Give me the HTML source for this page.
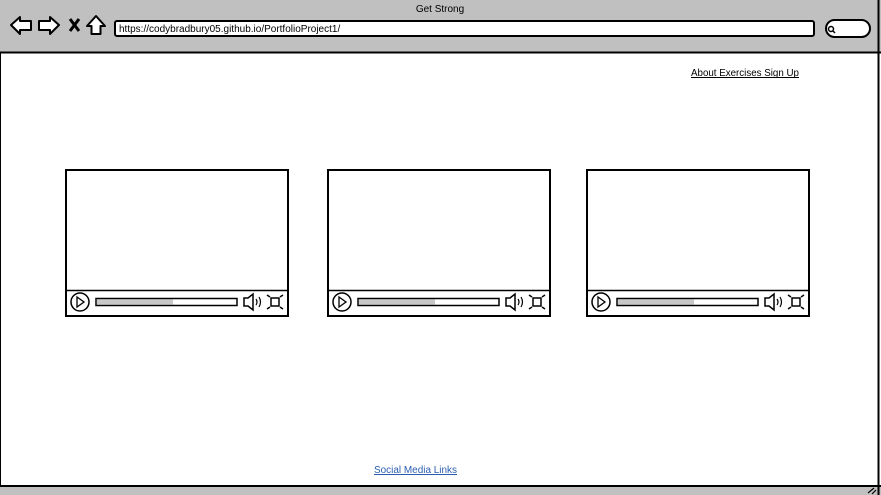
<!DOCTYPE html>
<html><head><meta charset="utf-8"><style>
html,body{margin:0;padding:0;width:881px;height:495px;overflow:hidden;background:#fff;font-family:"Liberation Sans",sans-serif}
svg{display:block}
</style></head><body>
<svg width="881" height="495" viewBox="0 0 881 495" xmlns="http://www.w3.org/2000/svg" font-family="Liberation Sans, sans-serif">
<rect x="0" y="0" width="881" height="52" fill="#c0c0c0"/>
<rect x="0" y="486" width="881" height="9" fill="#c0c0c0"/>
<line x1="0" y1="52.5" x2="881" y2="52.5" stroke="#000" stroke-width="2"/>
<line x1="0" y1="486" x2="881" y2="486" stroke="#000" stroke-width="2"/>
<line x1="878.5" y1="0" x2="878.5" y2="495" stroke="#000" stroke-width="2"/>
<line x1="0.5" y1="52" x2="0.5" y2="486" stroke="#000" stroke-width="1"/>
<text x="440" y="12" font-size="10" text-anchor="middle" fill="#000">Get Strong</text>
<path d="M11 25 L20 17 L20 21 L31 21 L31 30 L20 30 L20 34 Z" fill="#fff" stroke="#000" stroke-width="2" stroke-linejoin="round"/>
<path d="M59 25 L50 17 L50 21 L39 21 L39 30 L50 30 L50 34 Z" fill="#fff" stroke="#000" stroke-width="2" stroke-linejoin="round"/>
<path d="M70 19 L79 31 M79 19 L70 31" stroke="#000" stroke-width="3"/>
<path d="M96 16 L105 26 L100.5 26 L100.5 34 L91.5 34 L91.5 26 L87 26 Z" fill="#fff" stroke="#000" stroke-width="2" stroke-linejoin="round"/>
<rect x="115" y="21" width="699" height="15" rx="2" fill="#fff" stroke="#000" stroke-width="2"/>
<text x="119" y="32" font-size="10" fill="#000">https://codybradbury05.github.io/PortfolioProject1/</text>
<rect x="826" y="20" width="44" height="17" rx="8.5" fill="#fff" stroke="#000" stroke-width="2"/>
<circle cx="831" cy="29" r="2.5" fill="none" stroke="#000" stroke-width="1.5"/>
<line x1="833" y1="31" x2="835" y2="33" stroke="#000" stroke-width="1.5"/>
<text x="691" y="76" font-size="10" fill="#000" textLength="108" lengthAdjust="spacingAndGlyphs">About Exercises Sign Up</text>
<line x1="691" y1="77.5" x2="799" y2="77.5" stroke="#000" stroke-width="1"/>
<text x="374" y="473" font-size="10" fill="#2a5db0" textLength="83" lengthAdjust="spacingAndGlyphs">Social Media Links</text>
<line x1="374" y1="474.5" x2="457" y2="474.5" stroke="#2a5db0" stroke-width="1"/>
<g id="v" fill="none" stroke="#000">
<rect x="66" y="170" width="222" height="146" fill="#fff" stroke-width="2"/>
<line x1="66" y1="290.5" x2="288" y2="290.5" stroke-width="1.5"/>
<circle cx="80" cy="302" r="9" stroke-width="1.5"/>
<path d="M77 297 L84 302 L77 307 Z" stroke-width="1.3"/>
<rect x="96" y="298.5" width="141" height="7" stroke-width="1.5"/>
<rect x="97" y="299.5" width="76" height="5" fill="#c8c8c8" stroke="none"/>
<path d="M244 298 L248 298 L253 294 L253 310 L248 306 L244 306 Z" stroke-width="1.5"/>
<path d="M256 299 Q258 302 256 305 M259 297 Q262 302 259 307" stroke-width="1.2"/>
<rect x="271" y="298" width="8" height="8" stroke-width="1.5"/>
<path d="M267 295 L270 297 M283 295 L280 297 M267 309 L270 307 M283 309 L280 307" stroke-width="1.5"/>
</g>
<use href="#v" x="262" y="0"/>
<use href="#v" x="521" y="0"/>
<path d="M868 493 L874 488 M872 494 L876 490" stroke="#000" stroke-width="1.2"/>
</svg>
</body></html>
